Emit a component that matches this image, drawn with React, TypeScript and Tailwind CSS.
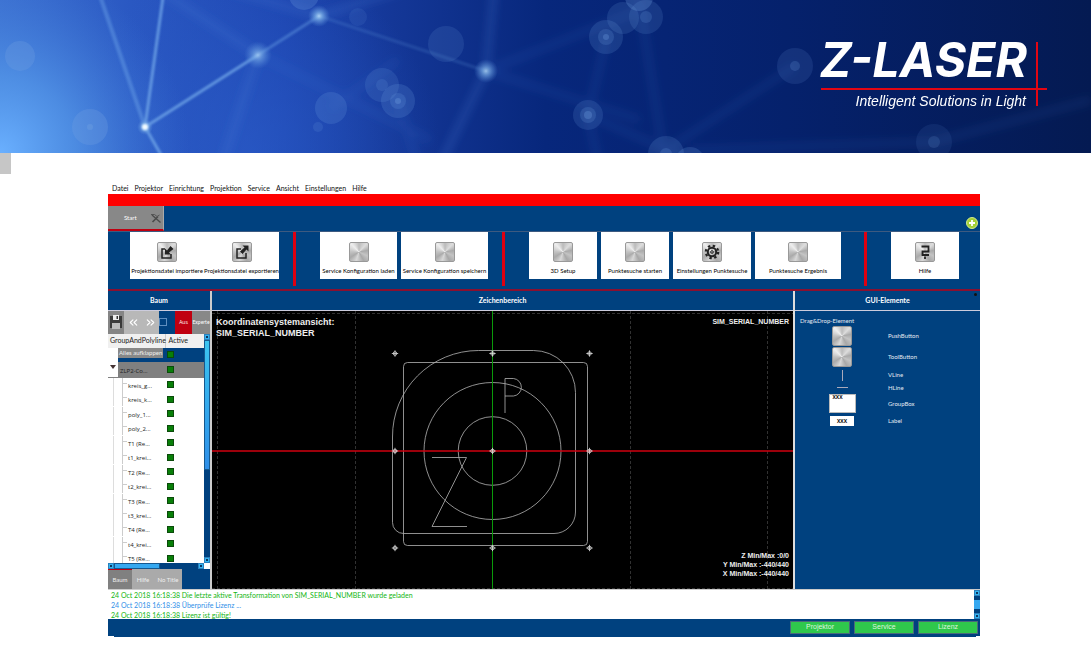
import type { ReactNode } from 'react'
import { ChevronsLeft, ChevronsRight } from 'lucide-react'

const menu = ['Datei', 'Projektor', 'Einrichtung', 'Projektion', 'Service', 'Ansicht', 'Einstellungen', 'Hilfe']

const treeItems = [
  'kreis_g...', 'kreis_k...', 'poly_1...', 'poly_2...', 'T1 (Re...', 't1_krei...', 'T2 (Re...',
  't2_krei...', 'T3 (Re...', 't3_krei...', 'T4 (Re...', 't4_krei...', 'T5 (Re...',
]

const log = [
  { text: '24 Oct 2018 16:18:38 Die letzte aktive Transformation von SIM_SERIAL_NUMBER wurde geladen', color: 'text-[#12b512]' },
  { text: '24 Oct 2018 16:18:38 Überprüfe Lizenz ...', color: 'text-[#2f8fe8]' },
  { text: '24 Oct 2018 16:18:38 Lizenz ist gültig!', color: 'text-[#12b512]' },
]

type Dot = [x: number, y: number, r: number, opacity: number]

const bokeh: Dot[] = [
  [20, 56, 15, 0.3], [90, 127, 18, 0.3], [90, 127, 3, 0.4], [331, 108, 16, 0.2], [318, 127, 5, 0.16],
  [382, 85, 17, 0.16], [382, 85, 6, 0.16], [398, 101, 17, 0.2], [398, 101, 8, 0.2], [398, 101, 3, 0.35],
  [446, 44, 18, 0.15], [358, 17, 9, 0.12], [304, -5, 15, 0.25], [623, 18, 16, 0.16], [646, 17, 17, 0.16],
  [646, 17, 6, 0.2], [639, -3, 14, 0.28], [606, 37, 17, 0.18], [606, 37, 8, 0.2], [606, 37, 3, 0.3],
  [588, 115, 15, 0.17], [588, 115, 8, 0.2], [588, 115, 4, 0.3], [795, 66, 18, 0.14], [795, 66, 5, 0.2],
  [666, 154, 18, 0.18], [666, 154, 6, 0.2], [690, 162, 15, 0.2], [934, 142, 18, 0.1], [934, 142, 6, 0.16],
]

const glows: Dot[] = [
  [145, 127, 8, 1], [258, 55, 14, 0.7], [319, 16, 11, 0.9], [486, 71, 12, 0.8],
]

function HeroBackdrop() {
  return (
    <svg className="absolute inset-0 h-full w-full" viewBox="0 0 1091 153" preserveAspectRatio="xMinYMin slice" aria-hidden="true">
      <defs>
        <linearGradient id="sky">
          <stop offset="0" stopColor="#3b6fd0" />
          <stop offset="0.12" stopColor="#2a58c2" />
          <stop offset="0.26" stopColor="#1d45b0" />
          <stop offset="0.36" stopColor="#143797" />
          <stop offset="0.5" stopColor="#07277c" />
          <stop offset="0.72" stopColor="#05216c" />
          <stop offset="1" stopColor="#041a52" />
        </linearGradient>
        <radialGradient id="corner" gradientUnits="userSpaceOnUse" cx="0" cy="153" r="190">
          <stop offset="0" stopColor="#6ab0ff" />
          <stop offset="0.4" stopColor="#5599ea" stopOpacity="0.75" />
          <stop offset="1" stopColor="#3f78d6" stopOpacity="0" />
        </radialGradient>
        <radialGradient id="haze" gradientUnits="userSpaceOnUse" cx="250" cy="150" r="190">
          <stop offset="0" stopColor="#2c5ecb" stopOpacity="0.6" />
          <stop offset="1" stopColor="#2c5ecb" stopOpacity="0" />
        </radialGradient>
        <radialGradient id="glow">
          <stop offset="0" stopColor="#b5dcfa" />
          <stop offset="0.35" stopColor="#7fb4ea" stopOpacity="0.75" />
          <stop offset="1" stopColor="#5b90dc" stopOpacity="0" />
        </radialGradient>
        <filter id="soft" filterUnits="userSpaceOnUse" x="0" y="-20" width="1091" height="200">
          <feGaussianBlur stdDeviation="1" />
        </filter>
        <filter id="softer" filterUnits="userSpaceOnUse" x="0" y="-20" width="1091" height="200">
          <feGaussianBlur stdDeviation="4" />
        </filter>
      </defs>
      <rect width="1091" height="153" fill="url(#sky)" />
      <rect width="1091" height="153" fill="url(#haze)" />
      <rect width="400" height="153" fill="url(#corner)" />
      <g stroke="#4c7fd8" fill="none" filter="url(#softer)">
        <path d="M160 -10 258 55 220 170M230 -10 319 16 400 -10M486 71 440 165M486 71 494 -10" strokeWidth="6" opacity="0.28" />
        <path d="M258 55 430 140M486 71 640 10M486 71 640 120M606 40 588 115 600 170M639 0 666 170M588 115 690 160M398 101 420 170M331 108 398 60M666 150 795 66M690 150 934 142 1091 100" strokeWidth="7" opacity="0.13" />
      </g>
      <g stroke="#74aaea" fill="none" filter="url(#soft)">
        <path d="M98 -10 145 127" strokeWidth="4" opacity="0.4" />
        <path d="M164 -10 145 127 164 160" strokeWidth="3" opacity="0.75" />
        <path d="M145 127 258 55" strokeWidth="3" opacity="0.75" />
        <path d="M258 55 319 16" strokeWidth="3" opacity="0.4" />
        <path d="M319 16 486 71" strokeWidth="3" opacity="0.18" />
      </g>
      {bokeh.map(([x, y, r, o], i) => <circle key={i} cx={x} cy={y} r={r} fill="#6f9fe0" opacity={o} />)}
      {glows.map(([x, y, r, o], i) => <circle key={i} cx={x} cy={y} r={r} fill="url(#glow)" opacity={o} />)}
      <circle cx="145" cy="127" r="3" fill="#f2fbff" filter="url(#soft)" />
    </svg>
  )
}

function Hero() {
  return (
    <header className="relative h-[153px] overflow-hidden bg-[#05216c]">
      <HeroBackdrop />
      <div className="relative flex justify-end pt-8 pr-[44px]">
        <div className="relative flex w-[226px] flex-col items-end text-white">
          <p className="flex w-full justify-end border-b-2 border-[#e30613] pr-5 font-[Inter] text-[48px] leading-[56px] font-bold whitespace-nowrap italic">Z-LASER</p>
          <p className="pt-[3px] pr-[21px] font-['Liberation_Sans'] text-[14px] leading-4 whitespace-nowrap italic">Intelligent Solutions in Light</p>
          <span className="absolute top-[10px] right-[9px] h-16 w-[2px] bg-[#e30613]" />
        </div>
      </div>
    </header>
  )
}

function Metal({ children }: { children?: ReactNode }) {
  return (
    <span className="flex size-5 shrink-0 items-center justify-center rounded-[2px] border border-[#999] bg-[conic-gradient(#bbb,#ddd_12%,#aaa_22%,#c4c4c4_32%,#a8a8a8_42%,#d8d8d8_55%,#aaa_66%,#c4c4c4_76%,#eee_88%,#bbb)] text-[#222]">
      {children}
    </span>
  )
}

function ImportIcon() {
  return (
    <svg viewBox="0 0 16 16" className="size-4">
      <path d="M6 5H3v9h9v-4" fill="none" stroke="currentColor" strokeWidth="1.500" />
      <path d="M6 4.500v6h6l-2-2 4.500-3.500L11.500 2 8 6.500Z" fill="currentColor" />
    </svg>
  )
}

function ExportIcon() {
  return (
    <svg viewBox="0 0 16 16" className="size-4">
      <path d="M7 5H3v9h9v-5" fill="none" stroke="currentColor" strokeWidth="1.500" />
      <path d="M14.500 1.500v6l-2-2-4 4.500L6 7.500 10.500 3.500l-2-2Z" fill="currentColor" />
    </svg>
  )
}

function GearIcon() {
  return (
    <svg viewBox="0 0 16 16" className="size-4" fill="none" stroke="currentColor">
      <circle cx="8" cy="8" r="4.200" strokeWidth="2" />
      <circle cx="8" cy="8" r="6.200" strokeWidth="2.200" strokeDasharray="2.400 2.470" />
      <circle cx="8" cy="8" r="1.300" strokeWidth="1" />
    </svg>
  )
}

function HelpIcon() {
  return (
    <svg viewBox="0 0 16 16" className="size-4" fill="none" stroke="currentColor" strokeWidth="1.800">
      <path d="M4.500 2.500h7v5h-6v3.500h6.500" />
      <path d="M8 12.500v2.500" />
    </svg>
  )
}

function Tool({ label, width, children }: { label: string; width: string; children?: ReactNode }) {
  return (
    <button className={`flex h-[47px] shrink-0 flex-col items-center gap-[5px] bg-white pt-[10px] font-[Lato] text-[6px] leading-[8px] whitespace-nowrap text-black ${width}`}>
      <Metal>{children}</Metal>
      {label}
    </button>
  )
}

function Divider() {
  return <span className="mr-6 ml-[14px] h-[54px] w-[3px] shrink-0 bg-[#e00010]" />
}

function Ribbon() {
  return (
    <div className="flex h-[58px] overflow-hidden border-t border-[#3d5a80] pl-[22px]">
      <div className="flex">
        <Tool label="Projektionsdatei importiere" width="w-[74px]"><ImportIcon /></Tool>
        <Tool label="Projektionsdatei exportieren" width="w-[75px]"><ExportIcon /></Tool>
      </div>
      <Divider />
      <div className="flex gap-1">
        <Tool label="Service Konfiguration laden" width="w-[77px]" />
        <Tool label="Service Konfiguration speichern" width="w-[87px]" />
      </div>
      <Divider />
      <div className="flex gap-1 pr-[9px]">
        <Tool label="3D Setup" width="w-[68px]" />
        <Tool label="Punktesuche starten" width="w-[68px]" />
        <Tool label="Einstellungen Punktesuche" width="w-[78px]"><GearIcon /></Tool>
        <Tool label="Punktesuche Ergebnis" width="w-[86px]" />
      </div>
      <Divider />
      <Tool label="Hilfe" width="w-[68px]"><HelpIcon /></Tool>
    </div>
  )
}

function TabBar() {
  return (
    <div className="flex h-[25px] items-stretch justify-between">
      <button className="flex w-[56px] items-center justify-between border-r border-b-2 border-r-[#aaa] border-b-[#c00010] bg-[#888] pr-[2px] pl-4 font-[Lato] text-[6px] text-white">
        Start
        <svg viewBox="0 0 10 10" className="size-[10px]" fill="none" stroke="#4a4a4a">
          <path d="M1 2 9.500 9.500" strokeWidth="1.300" />
          <path d="M7 3.500 1.500 9" strokeWidth="1.600" />
          <path d="M0 1.500h3.500L6 3.500 8.500 2" stroke="#555" strokeWidth="1" />
        </svg>
      </button>
      <button aria-label="Neuer Reiter" className="mt-[11px] mr-[2px] flex size-[12px] items-center justify-center rounded-full">
        <svg viewBox="0 0 12 12" className="size-[12px]">
          <circle cx="6" cy="6" r="5.500" fill="#a4d037" stroke="#d4eb8c" />
          <path d="M6 3v6M3 6h6" stroke="#fff" strokeWidth="1.800" />
        </svg>
      </button>
    </div>
  )
}

function PanelTitle({ children }: { children: ReactNode }) {
  return <h2 className="flex h-5 items-center justify-center border-b border-[#ccd] font-[Lato] text-[7px] leading-none font-bold text-white">{children}</h2>
}

function ActiveBox({ label }: { label: string }) {
  return <input type="checkbox" aria-label={label} defaultChecked className="block size-[7px] appearance-none border border-[#0b4a0b] bg-[#087f08]" />
}

function ScrollKnob() {
  return (
    <span className="flex size-[6px] shrink-0 items-center justify-center border border-[#2a80bd] bg-[#35b4f0]">
      <span className="size-[2px] bg-[#0d3560]" />
    </span>
  )
}

function Tree() {
  return (
    <div className="flex h-[231px] overflow-hidden bg-white">
      <div className="flex-1 overflow-hidden">
        <table className="h-[232px] w-full table-fixed border-collapse text-[6px] leading-none text-[#222]">
          <thead>
            <tr className="h-[14px] bg-[#f0f0f0] text-left font-[Lato] text-[7px]">
              <th className="w-[57px] border-r border-[#ccc] pl-[2px] font-normal whitespace-nowrap">GroupAndPolyline</th>
              <th className="pl-[3px] font-normal">Active</th>
            </tr>
          </thead>
          <tbody>
            <tr className="bg-[#00417f]">
              <td className="p-0">
                <span className="flex">
                  <span className="h-[14px] w-[10px] bg-white" />
                  <span className="h-[10px] bg-[#888] px-px py-[2px] font-[Lato] text-[6px] whitespace-nowrap text-[#eee]">Alles aufklappen</span>
                </span>
              </td>
              <td className="pl-[2px]"><ActiveBox label="Alle" /></td>
            </tr>
            <tr className="bg-[#808080]">
              <td className="p-0">
                <span className="flex h-[15px] items-stretch">
                  <span className="w-[10px] bg-white pt-[3px]">
                    <svg viewBox="0 0 6 4" className="ml-[2px] h-1 w-[6px]"><path d="M0 0h6L3 4Z" fill="#433" /></svg>
                  </span>
                  <span className="pt-[6px] pl-[2px]">ZLP2-Co...</span>
                </span>
              </td>
              <td className="pl-[2px]"><ActiveBox label="ZLP2-Co..." /></td>
            </tr>
            {treeItems.map((name) => (
              <tr key={name}>
                <td className="p-0 pl-[5px]">
                  <span className="flex h-[14px] border-l border-[#ddd] pl-2">
                    <span className="flex border-l border-[#ccc]">
                      <span className="mt-[5px] h-px w-1 bg-[#ccc]" />
                      <span className="pt-[5px] pl-px">{name}</span>
                    </span>
                  </span>
                </td>
                <td className="pl-[2px]"><ActiveBox label={name} /></td>
              </tr>
            ))}
          </tbody>
        </table>
      </div>
      <div className="flex w-[6px] flex-col bg-[#00417f]">
        <ScrollKnob />
        <span className="mb-auto h-[130px] border border-[#16588e] bg-linear-to-b from-[#3cc4f0] to-[#2f8fe8]" />
        <ScrollKnob />
      </div>
    </div>
  )
}

function TreePanel() {
  return (
    <section className="flex w-[104px] shrink-0 flex-col border-r-2 border-[#ccc]">
      <PanelTitle>Baum</PanelTitle>
      <div className="flex h-[23px] text-[5px] text-white">
        <button aria-label="Speichern" className="flex w-4 items-center justify-center bg-[#858585]">
          <svg viewBox="0 0 12 14" className="h-[14px] w-3">
            <path d="M0 1h12v12H0Z" fill="#3a3a3a" />
            <path d="M3 0h6v5H3Z" fill="#eee" />
            <path d="M6.500 1h1.500v3H6.500Z" fill="#333" />
            <path d="M2 8h8v6H2Z" fill="#bbb" />
          </svg>
        </button>
        <button aria-label="Zurück" className="flex w-[18px] items-center justify-center bg-[#b8b8b8]"><ChevronsLeft size={13} /></button>
        <button aria-label="Vor" className="flex w-[17px] items-center justify-center bg-[#b8b8b8]"><ChevronsRight size={13} /></button>
        <label className="flex w-4 items-center">
          <input type="checkbox" aria-label="Auswahl" className="size-[8px] appearance-none border border-[#5f8fc0]" />
        </label>
        <button className="w-[17px] bg-[#c00010]">Aus</button>
        <button className="flex-1 bg-[#888] font-[Lato]">Experte</button>
      </div>
      <Tree />
      <div className="flex h-[6px] bg-[#00417f]">
        <ScrollKnob />
        <span className="mr-auto w-[46px] border border-[#16588e] bg-[#35a8f0]" />
        <ScrollKnob />
        <span className="w-[6px] bg-white" />
      </div>
      <div className="flex h-5 text-[6px] text-[#eee]">
        <button className="w-6 border-t border-[#c00010] bg-[#808080] font-[Lato]">Baum</button>
        <button className="w-[22px] bg-[#aaa] font-[Lato]">Hilfe</button>
        <button className="w-7 bg-[#aaa] font-[Lato]">No Title</button>
      </div>
    </section>
  )
}

function Drawing() {
  return (
    <svg className="absolute inset-0 h-full w-full" viewBox="212 311 581 278" preserveAspectRatio="xMidYMid slice" fill="none" stroke="#b4b4b4" strokeWidth="0.8" role="img" aria-label="Koordinatensystem">
      <path d="M217.500 311V589M355.500 311V589M630.500 311V589M767.500 311V589M212 313.500H793M212 588.500H793" stroke="#3e3e3e" strokeDasharray="3 2" />
      <circle cx="492.500" cy="451" r="68.500" />
      <circle cx="492.500" cy="451" r="34.300" />
      <rect x="403.500" y="362.500" width="184" height="183" rx="4" />
      <path d="M478.500 350.500H533.500A42 42 0 0 1 575.500 392.500V512A21.500 21.500 0 0 1 554 533.500H403.500A11 11 0 0 1 392.500 522.500V437A86 86 0 0 1 478.500 350.500Z" />
      <path d="M505 413V378.500H513.500A8.800 8.800 0 0 1 513.500 396H505M432 457.500H466.500L432 526.500H467" />
      <path d="M212 451H793" stroke="#d0000f" strokeWidth="1.500" />
      <path d="M492.500 311V589" stroke="#0a9a0a" strokeWidth="1" />
      {[353.5, 451, 548].map((y) =>
        [395, 492.5, 589.5].map((x) => (
          <g key={`${x}-${y}`} stroke="#ddd">
            <circle cx={x} cy={y} r="1.800" />
            <path d={`M${x - 3.2} ${y}h6.400M${x} ${y - 3.2}v6.400`} />
          </g>
        )),
      )}
    </svg>
  )
}

function Canvas() {
  return (
    <section className="flex min-w-0 flex-1 flex-col border-r-2 border-[#ddd]">
      <PanelTitle>Zeichenbereich</PanelTitle>
      <div className="relative flex flex-1 flex-col justify-between overflow-hidden bg-black px-1 pt-[6px] pb-[11px] font-['Liberation_Sans'] font-bold text-[#eee]">
        <Drawing />
        <div className="relative flex items-start justify-between">
          <p className="text-[9px] leading-[11px]">Koordinatensystemansicht:<br />SIM_SERIAL_NUMBER</p>
          <p className="text-[7px] leading-[9px]">SIM_SERIAL_NUMBER</p>
        </div>
        <p className="relative text-right text-[7px] leading-[9px]">Z Min/Max :0/0<br />Y Min/Max :-440/440<br />X Min/Max :-440/440</p>
      </div>
    </section>
  )
}

function ElementRow({ label, height, children }: { label: string; height: string; children: ReactNode }) {
  return (
    <li className={`flex items-center ${height}`}>
      <span className="flex w-[84px] justify-center">{children}</span>
      <span className="pl-1 font-[Lato]">{label}</span>
    </li>
  )
}

function ElementsPanel() {
  return (
    <section className="relative flex w-[185px] shrink-0 flex-col">
      <PanelTitle>GUI-Elemente</PanelTitle>
      <span className="absolute top-[2px] right-[3px] size-[3px] rounded-full bg-[#111]" />
      <div className="pt-[6px] pl-[5px] text-[6px] leading-[8px] text-[#e4eaf2]">
        <p className="font-[Lato]">Drag&amp;Drop-Element</p>
        <ul>
          <ElementRow label="PushButton" height="h-[21px]"><Metal /></ElementRow>
          <ElementRow label="ToolButton" height="h-[22px]"><Metal /></ElementRow>
          <ElementRow label="VLine" height="h-[14px]"><span className="h-[11px] w-px bg-[#aab]" /></ElementRow>
          <ElementRow label="HLine" height="h-[11px]"><span className="h-px w-[11px] bg-[#aab]" /></ElementRow>
          <ElementRow label="GroupBox" height="h-[21px]">
            <span className="h-[19px] w-[27px] border border-[#bbb] bg-white pl-[3px] text-[5px] leading-[5px] font-bold text-black">XXX</span>
          </ElementRow>
          <ElementRow label="Label" height="h-[14px]">
            <span className="h-[10px] w-6 bg-white text-center text-[5px] leading-[10px] font-bold text-black">XXX</span>
          </ElementRow>
        </ul>
      </div>
    </section>
  )
}

function LogView() {
  return (
    <div className="flex h-[30px] justify-between border-t border-[#ccc] bg-white">
      <div className="pl-[3px] font-[Lato] text-[7px] leading-[10px] whitespace-nowrap">
        {log.map((l) => <p key={l.text} className={l.color}>{l.text}</p>)}
      </div>
      <div className="flex w-[6px] flex-col justify-between bg-[#00417f]">
        <ScrollKnob />
        <span className="h-[9px] bg-[#35a8f0]" />
        <ScrollKnob />
      </div>
    </div>
  )
}

export default function App() {
  return (
    <div className="min-h-screen bg-white font-['Open_Sans',sans-serif]">
      <Hero />
      <span className="block h-[21px] w-[11px] bg-[#c6c6c6]" />
      <main className="mr-[111px] ml-[108px] pt-[9px]">
        <nav className="flex h-[11px] items-center gap-[6px] pl-1 font-[Lato] text-[7px] leading-[9px] text-[#111]">
          {menu.map((m) => <a key={m} href="#">{m}</a>)}
        </nav>
        <div className="bg-[#00417f]">
          <div className="h-3 bg-[#f00]" />
          <TabBar />
          <Ribbon />
          <div className="flex h-[300px] border-t-2 border-[#8a1030]">
            <TreePanel />
            <Canvas />
            <ElementsPanel />
          </div>
          <LogView />
          <footer className="flex h-[17px] items-center justify-end gap-1 pr-[2px] font-['Liberation_Sans'] text-[7px] text-[#dff5df]">
            {['Projektor', 'Service', 'Lizenz'].map((b) => (
              <button key={b} className="h-[13px] w-[60px] border border-[#4a6a7a] bg-[#2fc84c]">{b}</button>
            ))}
          </footer>
        </div>
        <div className="mr-1 ml-[6px] h-px bg-[#00417f]" />
      </main>
    </div>
  )
}
